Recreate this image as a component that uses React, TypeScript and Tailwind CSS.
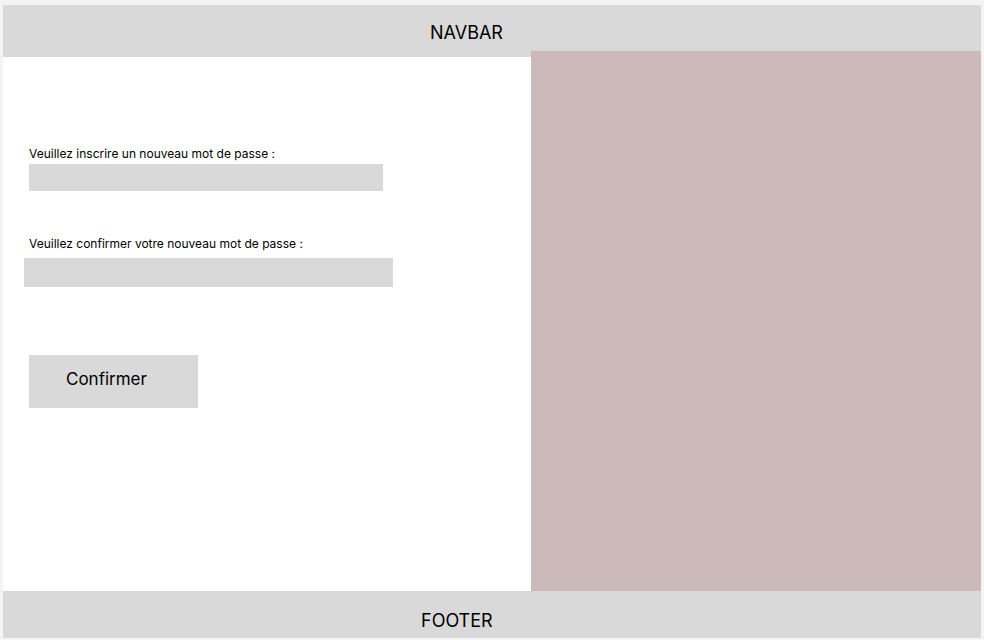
import React from "react";

const App = () => {
  return (
    <div className="h-[640px] w-[984px] bg-[#f4f4f4] px-[3px] pt-[5px] pb-[2px] font-['Inter',sans-serif] text-black">
      <div className="flex h-full flex-col bg-white">
        {/* Navbar */}
        <header className="flex h-[52px] shrink-0 items-center bg-[#d9d9d9] pl-[427px] pt-[2px] text-[18px]">
          NAVBAR
        </header>

        {/* Main content */}
        <main className="flex flex-1">
          <section className="flex w-[528px] flex-col pl-[26px]">
            <label className="mt-[90px] block text-[12px] leading-[14px]">
              Veuillez inscrire un nouveau mot de passe :
            </label>
            <input
              type="password"
              className="mt-[3px] h-[27px] w-[354px] bg-[#d9d9d9] outline-none"
            />

            <label className="mt-[46px] block text-[12px] leading-[14px]">
              Veuillez confirmer votre nouveau mot de passe :
            </label>
            <input
              type="password"
              className="-ml-[5px] mt-[7px] h-[29px] w-[369px] bg-[#d9d9d9] outline-none"
            />

            <button className="mt-[68px] flex h-[53px] w-[169px] items-center bg-[#d9d9d9] pb-[3px] pl-[37px] text-[17px]">
              Confirmer
            </button>
          </section>

          <aside className="-mt-[6px] flex-1 bg-[#ccb9b9]" />
        </main>

        {/* Footer */}
        <footer className="flex h-[47px] shrink-0 items-center bg-[#d9d9d9] pl-[418px] pt-[12px] text-[18px]">
          FOOTER
        </footer>
      </div>
    </div>
  );
};

export default App;
